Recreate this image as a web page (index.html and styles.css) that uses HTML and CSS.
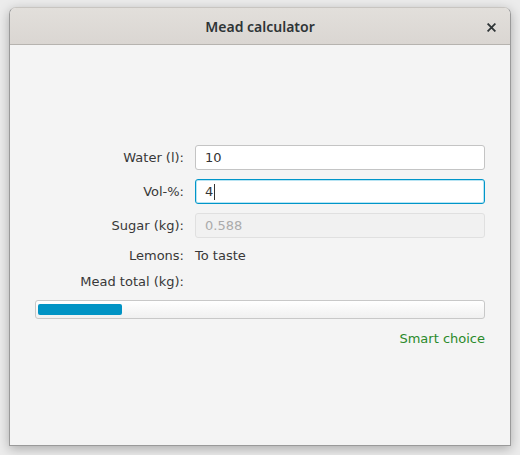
FILE: index.html
```html
<!DOCTYPE html>
<html>
<head>
<meta charset="utf-8">
<link rel="stylesheet" href="styles.css">
</head>
<body>
<div class="window">
  <div class="titlebar">
    <span class="title">Mead calculator</span>
    <span class="close">
      <svg width="9" height="9" viewBox="0 0 9 9"><path d="M1.2 1.2 L7.8 7.8 M7.8 1.2 L1.2 7.8" stroke="#2e3436" stroke-width="1.8" stroke-linecap="square"/></svg>
    </span>
  </div>
  <div class="content">
    <div class="form">
      <label class="lbl">Water (l):</label>
      <div class="field">10</div>
      <label class="lbl">Vol-%:</label>
      <div class="field focused">4<span class="caret"></span></div>
      <label class="lbl">Sugar (kg):</label>
      <div class="field disabled">0.588</div>
      <label class="lbl row">Lemons:</label>
      <div class="val row">To taste</div>
      <label class="lbl row">Mead total (kg):</label>
      <div class="val row"></div>
    </div>
    <div class="progress"><div class="fill" style="width: 84px"></div></div>
    <div class="smart">Smart choice</div>
  </div>
</div>
</body>
</html>
```
FILE: styles.css
```css
html, body {
  margin: 0;
  padding: 0;
}
body {
  width: 520px;
  height: 455px;
  background: #ececec;
  font-family: "DejaVu Sans", sans-serif;
  font-size: 13px;
  color: #383838;
  overflow: hidden;
  padding-top: 7px;
  padding-left: 9px;
  box-sizing: border-box;
}
.window {
  width: 502px;
  height: 439px;
  box-sizing: border-box;
  border: 1px solid #9a9a9a;
  border-top-color: #c8c5c1;
  border-radius: 7px 7px 0 0;
  background: #f4f4f4;
  box-shadow: 0 3px 12px rgba(0,0,0,0.28);
  display: flex;
  flex-direction: column;
  overflow: hidden;
}
.titlebar {
  height: 37px;
  flex: none;
  box-sizing: border-box;
  background: linear-gradient(#e2dfdb, #dad6d2);
  border-bottom: 1px solid #b6b3af;
  display: flex;
  align-items: center;
  justify-content: center;
  position: relative;
}
.title {
  font-family: "Noto Sans", sans-serif;
  font-weight: 600;
  font-size: 14px;
  color: #2e3436;
}
.close {
  position: absolute;
  right: 14px;
  top: 15px;
  width: 9px;
  height: 9px;
  display: flex;
}
.content {
  padding: 100px 25px 0 25px;
  display: flex;
  flex-direction: column;
}
.form {
  display: grid;
  grid-template-columns: 149px 290px;
  column-gap: 11px;
  row-gap: 9px;
  align-items: center;
}
.lbl {
  text-align: right;
  line-height: 17px;
}
.val {
  line-height: 17px;
  min-height: 17px;
}
.field {
  height: 25px;
  box-sizing: border-box;
  border: 1px solid #c4c4c4;
  border-radius: 3px;
  background: #ffffff;
  padding-left: 9px;
  line-height: 23px;
  color: #333333;
  display: flex;
  align-items: center;
}
.field.focused {
  border: 1px solid #0096c9;
  box-shadow: inset 0 0 0 1px #b8e4f3;
}
.caret {
  display: inline-block;
  width: 1px;
  height: 16px;
  background: #333;
  margin-left: 1px;
}
.field.disabled {
  background: #f1f1f1;
  border-color: #e0e0e0;
  color: #ababab;
}
.progress {
  margin-top: 10px;
  height: 19px;
  box-sizing: border-box;
  border: 1px solid #c8c8c8;
  border-radius: 3px;
  background: linear-gradient(#ffffff, #f0f0f0);
  padding: 3px 2px;
  display: flex;
}
.fill {
  height: 100%;
  background: #0093c4;
  border-radius: 2px;
}
.smart {
  margin-top: 11px;
  text-align: right;
  color: #2a8a2a;
  line-height: 17px;
}
```
